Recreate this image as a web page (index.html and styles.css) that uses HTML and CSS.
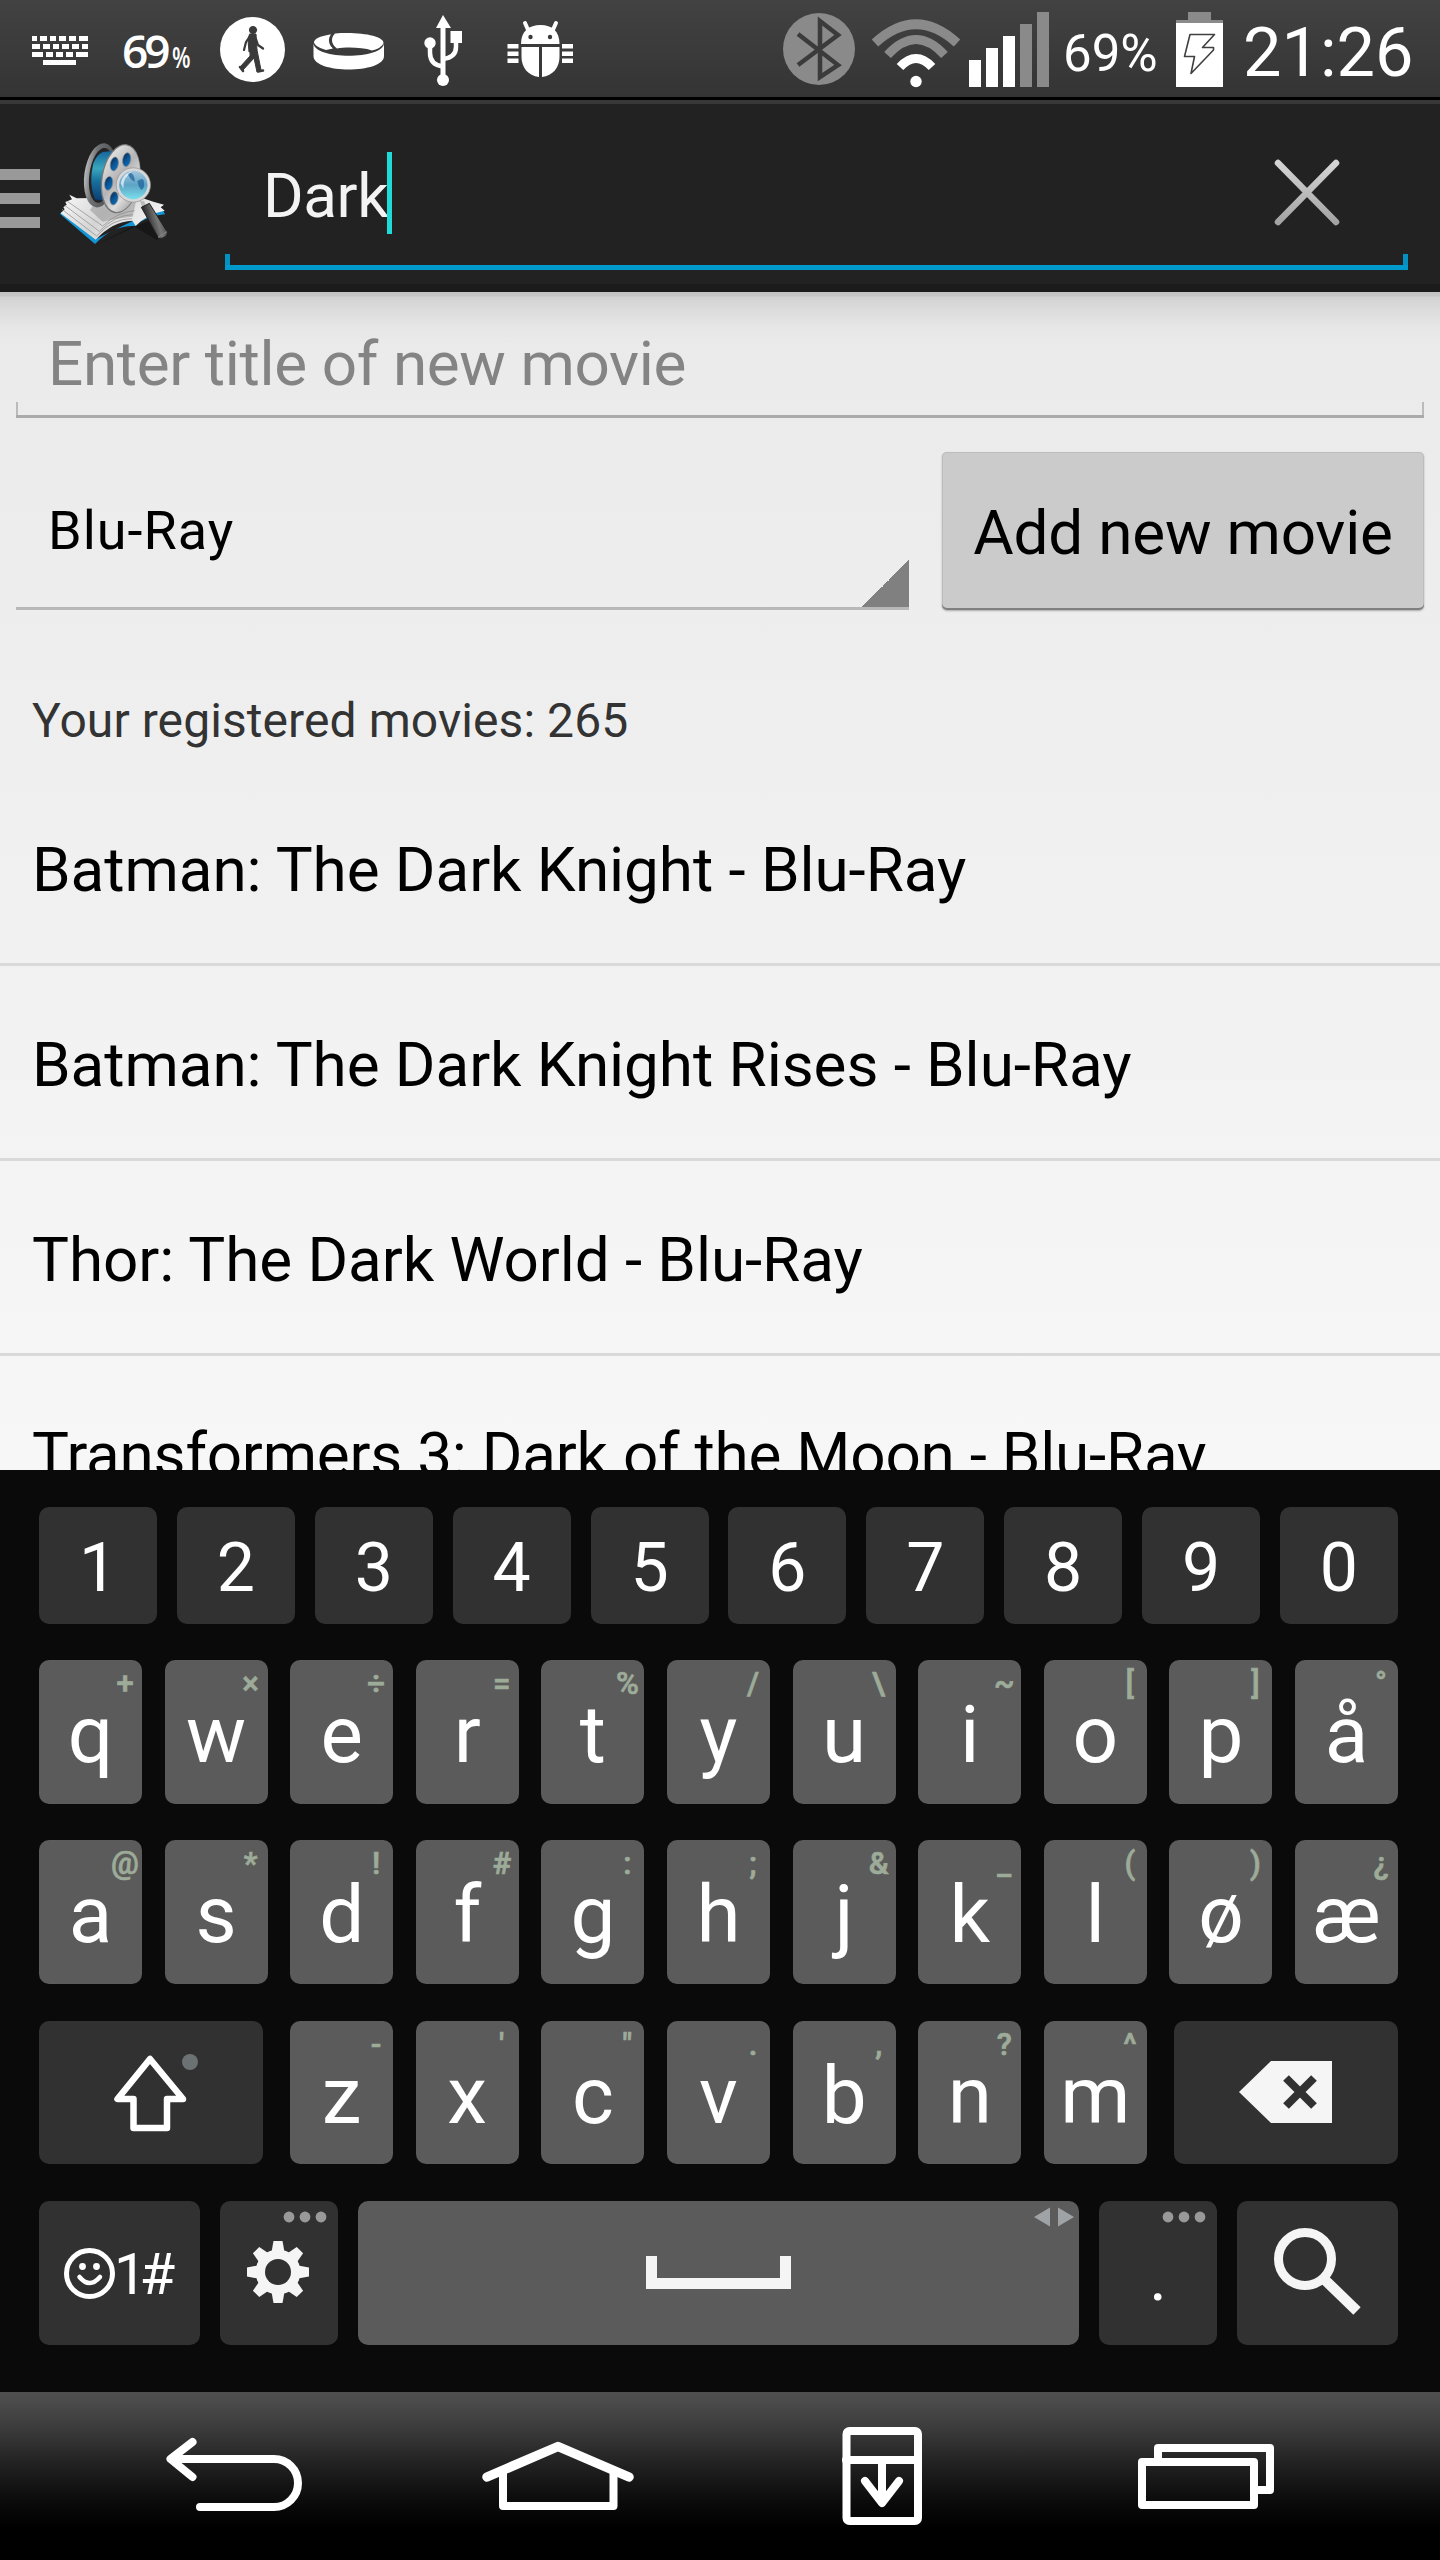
FILE: index.html
```html
<!DOCTYPE html>
<html lang="en">
<head>
<meta charset="utf-8">
<title>Movies</title>
<link rel="stylesheet" href="styles.css">
</head>
<body>
<div class="screen">
  <header class="status">
    <div class="status-left">
      <svg class="ic" width="64" height="97" viewBox="28 0 64 97" fill="#fff">
        <path d="M32 36h5v5h-5zM40 36h7v5h-7zM50 36h6v5h-6zM59 36h7v5h-7zM69 36h7v5h-7zM79 36h9v5h-9zM32 44h8v5h-8zM43 44h7v5h-7zM53 44h6v5h-6zM62 44h7v5h-7zM72 44h7v5h-7zM82 44h6v5h-6zM32 52h11v5h-11zM46 52h7v5h-7zM56 52h7v5h-7zM66 52h7v5h-7zM76 52h12v5h-12zM43 60h33v5h-33z"/>
      </svg>
      <span class="pct-icon"><b>69</b><small>%</small></span>
      <svg class="ic walker" width="66" height="97" viewBox="220 0 66 97">
        <circle cx="252.500" cy="49.500" r="32.500" fill="#fff"/>
        <g fill="#3a3a3a" stroke="#3a3a3a" stroke-linejoin="round" stroke-linecap="round">
          <circle cx="253" cy="30" r="3.600"/>
          <path d="M250 34L256 34L257 50L249 52L248 40Z" stroke-width="1"/>
          <path d="M250 36L246 42L244 50M256 39L258 45L263 48.500" fill="none" stroke-width="2.200"/>
          <path d="M250 50L250 56L240 67L243 70L254 58L257 72L261 70L257 50Z" stroke-width="1"/>
          <path d="M240 67L243 71M258 71.500L263 70.500" fill="none" stroke-width="2.500"/>
        </g>
      </svg>
      <svg class="ic ring" width="72" height="97" viewBox="313 0 72 97">
        <path d="M313.500 43V56C313.500 74 384 74 384 56V43C384 60 313.500 60 313.500 43Z" fill="#fff"/>
        <path d="M330 34.500C320 36 314 39 314 42.500C315 46 320 48 326 50L333 48.500C328 44 328 38 331 34.500Z" fill="#fff"/>
        <path d="M335 33.500C360 31.500 384 36 383.500 43C382 47 377 49.500 372 50.500C362 47 345 47 337 48.500C331 44 330.500 38 335 33.500Z" fill="#fff"/>
      </svg>
      <svg class="ic usb" width="40" height="97" viewBox="423 0 40 97" fill="#fff">
        <path d="M443 15L451 28H436Z"/><path d="M440.500 27h5v48h-5z"/><circle cx="443" cy="80" r="6"/>
        <circle cx="430" cy="43" r="5.700"/><path d="M450.500 31h11.500v12h-11.500z"/>
        <path d="M430 45V53C430 61 435 65.500 443 66.500M456 42V47C456 54 451 58 443 59" fill="none" stroke="#fff" stroke-width="4.500"/>
      </svg>
      <svg class="ic bug" width="68" height="97" viewBox="506 0 68 97" fill="#fff">
        <path d="M525 23L529 32M556 23L552 32" stroke="#fff" stroke-width="4" stroke-linecap="round"/>
        <path d="M521 44C521 31 529 25 540.500 25S559.500 31 559.500 44Z"/>
        <path d="M521.500 47H539V77C528 76 521.500 67 521.500 57ZM542 47H559.500V57C559.500 67 553 76 542 77Z"/>
        <path d="M507.500 44h11v4.500h-11zM507.500 51.500h11v4.500h-11zM507.500 58.500h11v4.500h-11zM562 44h11v4.500h-11zM562 51.500h11v4.500h-11zM562 58.500h11v4.500h-11z"/>
        <circle cx="530.500" cy="37" r="2.200" fill="#3b3b3b"/><circle cx="550" cy="37" r="2.200" fill="#3b3b3b"/>
      </svg>
    </div>
    <div class="status-right">
      <svg class="ic" width="72" height="97" viewBox="783 0 72 97">
        <circle cx="819" cy="49" r="36" fill="#8a8a8a"/>
        <path d="M798 34L838 65L820 77V21L838 35L798 65" fill="none" stroke="#3b3b3b" stroke-width="4.500"/>
      </svg>
      <svg class="ic wifi" width="88" height="97" viewBox="872 0 88 97">
        <g fill="none" stroke="#8a8a8a"><path d="M875 43Q916 5.500 957 43" stroke-width="9.500"/><path d="M887.500 55Q916 24 944.500 55" stroke-width="9"/></g>
        <path d="M900 67Q916 50 932 67" fill="none" stroke="#fff" stroke-width="9"/><circle cx="916" cy="81.500" r="5.700" fill="#fff"/>
      </svg>
      <svg class="ic signal" width="80" height="97" viewBox="969 0 80 97" fill="#fff">
        <path d="M969 60h12v27h-12zM986 48h12v39h-12zM1003 36h12v51h-12z"/><path d="M1020 24h12v63h-12zM1037 12h12v75h-12z" fill="#8a8a8a"/>
      </svg>
      <span class="battery-text">69%</span>
      <svg class="ic battery" width="47" height="97" viewBox="1176 0 47 97">
        <path d="M1188 12h23v8h12v4h-47v-4h12z" fill="#8a8a8a"/><path d="M1176 23h47v64h-47z" fill="#fff"/>
        <path d="M1190 34.500H1214.500L1202.500 47.500H1213.500V50L1191 73.500L1194.500 56.500H1184.500Z" fill="none" stroke="#404040" stroke-width="1.600" stroke-linejoin="round"/>
      </svg>
      <span class="clock">21:26</span>
    </div>
  </header>

  <div class="actionbar">
    <svg class="ic" width="40" height="188" viewBox="0 104 40 188" fill="#999"><path d="M0 169h40v11H0zM0 193h40v11H0zM0 217h40v11H0z"/></svg>
    <svg class="logo" width="150" height="150" viewBox="0 0 450 450">
      <defs>
        <linearGradient id="rim" x1="0" y1="0" x2="1" y2="1"><stop offset="0" stop-color="#f4f4f4"/><stop offset=".45" stop-color="#b4b4b6"/><stop offset=".7" stop-color="#ddd"/><stop offset="1" stop-color="#8c8c8e"/></linearGradient>
        <linearGradient id="rimback" x1="0" y1="0" x2="1" y2="0"><stop offset="0" stop-color="#b9babc"/><stop offset=".3" stop-color="#6f7072"/><stop offset="1" stop-color="#48494b"/></linearGradient>
        <linearGradient id="film" x1="0" y1="0" x2="0" y2="1"><stop offset="0" stop-color="#12639b"/><stop offset=".35" stop-color="#3aa6bd"/><stop offset=".6" stop-color="#17709c"/><stop offset="1" stop-color="#0b3d75"/></linearGradient>
        <linearGradient id="hole" x1="0" y1="0" x2="1" y2="1"><stop offset="0" stop-color="#0a2745"/><stop offset=".5" stop-color="#0a5596"/><stop offset="1" stop-color="#0f74ba"/></linearGradient>
        <linearGradient id="lens" x1="0" y1="0" x2="0" y2="1"><stop offset="0" stop-color="#a9c9e0"/><stop offset=".5" stop-color="#5ea3c6"/><stop offset="1" stop-color="#7be6ee"/></linearGradient>
        <linearGradient id="page" x1="0" y1="0" x2="1" y2=".4"><stop offset="0" stop-color="#fafafa"/><stop offset=".5" stop-color="#d5d5d5"/><stop offset="1" stop-color="#f5f5f5"/></linearGradient>
        <linearGradient id="handle" x1="0" y1=".4" x2="1" y2="0"><stop offset="0" stop-color="#111"/><stop offset=".5" stop-color="#777"/><stop offset="1" stop-color="#222"/></linearGradient>
      </defs>
      <path d="M165 376L280 318L350 360L382 345L330 300Z" fill="#111" opacity=".6"/>
      <path d="M60 282L165 372Q220 315 283 318L300 306Q330 288 375 283L368 268L284 300L166 358L66 274Z" fill="#1396d6"/>
      <path d="M88 224L110 235L300 232L340 245L372 254L362 262L374 272Q320 282 287 318L277 302Q218 304 167 359L62 280L74 268L70 262L80 254L76 246L96 238Z" fill="url(#page)"/>
      <path d="M66 268L170 348Q218 295 276 296M74 256L178 334Q225 285 278 284M82 244L188 318Q232 276 284 272" fill="none" stroke="#999" stroke-width="2.500"/>
      <path d="M170 240L290 235L278 290Q225 295 188 305L150 270Z" fill="#888" opacity=".45"/>
      <ellipse cx="181" cy="166" rx="48" ry="97" transform="rotate(8 181 166)" fill="url(#rimback)"/>
      <ellipse cx="184" cy="166" rx="36" ry="83" transform="rotate(8 184 166)" fill="#242526"/>
      <path d="M188 96L225 92L198 244L165 238Q145 190 160 130Q170 104 188 96Z" fill="url(#film)"/>
      <ellipse cx="242" cy="176" rx="58" ry="105" transform="rotate(10 242 176)" fill="#77787a"/>
      <ellipse cx="243" cy="176" rx="55" ry="101" transform="rotate(10 243 176)" fill="url(#rim)"/>
      <g fill="url(#hole)" stroke="#8b8c8e" stroke-width="2">
        <ellipse cx="223" cy="132" rx="12" ry="21" transform="rotate(10 223 132)"/><ellipse cx="260" cy="119" rx="12" ry="21" transform="rotate(10 260 119)"/>
        <ellipse cx="206" cy="190" rx="12" ry="21" transform="rotate(10 206 190)"/><ellipse cx="222" cy="235" rx="12" ry="20" transform="rotate(10 222 235)"/>
      </g>
      <path d="M300 244L312 243L320 262L309 267Z" fill="#bbb"/>
      <path d="M304 262L328 250L383 338Q380 354 357 356Z" fill="url(#handle)" stroke="#222" stroke-width="3"/>
      <path d="M354 352L380 335" stroke="#888" stroke-width="3"/>
      <circle cx="280" cy="195" r="47" fill="url(#lens)" stroke="#d8d8d8" stroke-width="9"/>
      <circle cx="280" cy="195" r="51.500" fill="none" stroke="#8b8b8b" stroke-width="2"/>
      <path d="M262 158Q284 155 284 185Q270 180 262 158ZM292 184Q316 165 312 200Q302 224 292 184Z" fill="#145a92" opacity=".65"/>
      <path d="M242 190Q250 158 278 153Q248 172 250 206Z" fill="#fff" opacity=".65"/>
    </svg>
    <div class="search">
      <span class="query">Dark</span><i class="caret"></i>
      <svg class="clear" width="84" height="84" viewBox="1265 150 84 84"><defs><linearGradient id="x" x1="0" y1="0" x2="0" y2="1"><stop offset="0" stop-color="#d4d4d4"/><stop offset="1" stop-color="#a4a4a4"/></linearGradient></defs><path d="M1278 163L1336 222M1336 163L1278 222" stroke="url(#x)" stroke-width="6.500" stroke-linecap="round"/></svg>
    </div>
  </div>

  <main class="content">
    <div class="title-input">Enter title of new movie</div>
    <div class="form-row">
      <div class="spinner"><span>Blu-Ray</span></div>
      <div class="add">Add new movie</div>
    </div>
    <p class="count">Your registered movies: 265</p>
    <ul class="movies">
      <li>Batman: The Dark Knight - Blu-Ray</li>
      <li>Batman: The Dark Knight Rises - Blu-Ray</li>
      <li>Thor: The Dark World - Blu-Ray</li>
      <li class="tight">Transformers 3: Dark of the Moon - Blu-Ray</li>
    </ul>
  </main>

  <section class="keyboard">
    <div class="row numbers">
      <div class="key">1</div><div class="key">2</div><div class="key">3</div><div class="key">4</div><div class="key">5</div><div class="key">6</div><div class="key">7</div><div class="key">8</div><div class="key">9</div><div class="key">0</div>
    </div>
    <div class="row letters">
      <div class="key">q<sup>+</sup></div><div class="key">w<sup>×</sup></div><div class="key">e<sup>÷</sup></div><div class="key">r<sup>=</sup></div><div class="key">t<sup>%</sup></div><div class="key">y<sup>/</sup></div><div class="key">u<sup>\</sup></div><div class="key">i<sup>~</sup></div><div class="key">o<sup>[</sup></div><div class="key">p<sup>]</sup></div><div class="key">å<sup>°</sup></div>
    </div>
    <div class="row letters">
      <div class="key">a<sup>@</sup></div><div class="key">s<sup>*</sup></div><div class="key">d<sup>!</sup></div><div class="key">f<sup>#</sup></div><div class="key">g<sup>:</sup></div><div class="key">h<sup>;</sup></div><div class="key">j<sup>&amp;</sup></div><div class="key">k<sup>_</sup></div><div class="key">l<sup>(</sup></div><div class="key">ø<sup>)</sup></div><div class="key">æ<sup>¿</sup></div>
    </div>
    <div class="row third">
      <div class="fn"><svg class="ic" width="224" height="143" viewBox="39 2021 224 143"><path d="M150 2059L117.500 2099H133.500V2128H167V2099H183Z" fill="none" stroke="#fff" stroke-width="6.500" stroke-linejoin="round"/><circle cx="190" cy="2062" r="8" fill="#6c7174"/></svg></div>
      <div class="letters mid">
        <div class="key">z<sup>-</sup></div><div class="key">x<sup>'</sup></div><div class="key">c<sup>"</sup></div><div class="key">v<sup>.</sup></div><div class="key">b<sup>,</sup></div><div class="key">n<sup>?</sup></div><div class="key">m<sup>^</sup></div>
      </div>
      <div class="fn"><svg class="ic" width="224" height="143" viewBox="1174 2021 224 143"><path d="M1239 2092L1271 2061H1332V2123H1271Z" fill="#f5f5f5"/><path d="M1286 2078L1314 2106M1314 2078L1286 2106" stroke="#313131" stroke-width="8"/></svg></div>
    </div>
    <div class="row bottom">
      <div class="fn sym"><svg class="ic smile" width="54" height="144" viewBox="62 2201 54 144"><circle cx="89.500" cy="2273.500" r="23" fill="none" stroke="#fff" stroke-width="5"/><circle cx="82.500" cy="2266.500" r="3.400" fill="#fff"/><circle cx="96.500" cy="2266.500" r="3.400" fill="#fff"/><path d="M79.500 2277Q89.500 2289 100 2277" fill="none" stroke="#fff" stroke-width="4.500" stroke-linecap="round"/></svg><span>1#</span></div>
      <div class="fn narrow"><svg class="ic" width="118" height="144" viewBox="220 2201 118 144">
        <g transform="translate(278 2272)" fill="#f5f5f5"><g id="teeth"><path d="M-6.500 -20L-4.500 -31H4.500L6.500 -20V20L4.500 31H-4.500L-6.500 20Z"/><path d="M-20 -6.500L-31 -4.500V4.500L-20 6.500H20L31 4.500V-4.500L20 -6.500Z"/></g><use href="#teeth" transform="rotate(45)"/><circle r="22.500"/><circle r="13" fill="#313131"/></g>
        <g fill="#999"><circle cx="289" cy="2217" r="5.400"/><circle cx="305" cy="2217" r="5.400"/><circle cx="321" cy="2217" r="5.400"/></g></svg></div>
      <div class="space"><svg class="ic" width="721" height="144" viewBox="358 2201 721 144"><path d="M646 2256h11v22h123v-22h11v33H646z" fill="#f5f5f5"/><path d="M1050 2207.500V2226.500L1034 2217ZM1058 2207.500V2226.500L1074 2217Z" fill="#9fa3a5"/></svg></div>
      <div class="fn narrow dotkey">.<svg class="more" width="44" height="14" viewBox="1162 2210 44 14" fill="#999"><circle cx="1168" cy="2217" r="5.400"/><circle cx="1184" cy="2217" r="5.400"/><circle cx="1200" cy="2217" r="5.400"/></svg></div>
      <div class="fn sym"><svg class="ic" width="161" height="144" viewBox="1237 2201 161 144" fill="none" stroke="#f5f5f5"><circle cx="1305" cy="2259" r="26.500" stroke-width="9"/><path d="M1325 2280L1357 2311" stroke-width="10.500"/></svg></div>
    </div>
  </section>

  <nav class="navbar">
    <svg class="ic" width="1440" height="168" viewBox="0 2392 1440 168" fill="none" stroke="#fff" stroke-width="8" stroke-linecap="round" stroke-linejoin="round">
      <path d="M192.500 2442L170.500 2459L192.500 2477M171 2459H274a24 24 0 0 1 0 48H200"/>
      <path d="M487 2477L558 2446.500L629 2477" stroke-width="9.500"/><path d="M503 2472V2506H613.500V2472"/>
      <rect x="846.500" y="2431" width="71.500" height="90" rx="3"/><path d="M846 2460H918M882 2460V2500M865 2481L882 2503L899 2481"/>
      <rect x="1142" y="2462" width="112" height="43"/><path d="M1158 2462V2448H1270V2490H1256"/>
    </svg>
  </nav>
</div>
</body>
</html>
```
FILE: styles.css
```css
* { box-sizing: border-box; }
body { margin: 0; background: #000; font-family: Roboto, "Noto Sans", sans-serif; }
.screen { width: 1440px; height: 2560px; display: flex; flex-direction: column; overflow: hidden; }
.ic { display: block; flex: none; }
span { white-space: nowrap; }

.status { height: 100px; flex: none; display: flex; justify-content: space-between; background: linear-gradient(#424242, #343434 97px, #000 97px); color: #fff; }
.status-left, .status-right { display: flex; height: 97px; }
.status-left { padding-left: 28px; }
.status-right { width: 657px; }
.pct-icon { width: 70px; margin-left: 30px; display: flex; align-items: baseline; }
.pct-icon b { font: 600 46px/101px "Open Sans", sans-serif; letter-spacing: -4px; }
.pct-icon small { font: 600 29px/101px "Open Sans", sans-serif; margin-left: 5px; transform: scaleX(.74); transform-origin: 0 50%; }
.walker { margin-left: 28px; }
.ring { margin-left: 27px; }
.usb { margin-left: 38px; }
.bug { margin-left: 43px; }
.wifi { margin-left: 17px; }
.signal { margin-left: 9px; }
.battery-text { width: 112px; padding-left: 14px; font-size: 51px; line-height: 107px; }
.battery { margin-left: 15px; }
.clock { margin-left: 20px; font-size: 68.5px; line-height: 106px; }

.actionbar { height: 192px; flex: none; display: flex; border-top: 4px solid #383838; background: linear-gradient(#222 180px, #1b1b1b 180px); }
.logo { margin-top: 16px; flex: none; }
.search { width: 1183px; height: 166px; margin-left: 35px; padding-left: 38px; display: flex; align-items: flex-start;
  background: linear-gradient(#0099cc, #0099cc) 0 100% / 100% 5px no-repeat, linear-gradient(#0490c0, #0490c0) 0 100% / 5px 16px no-repeat, linear-gradient(#0490c0, #0490c0) 100% 100% / 5px 16px no-repeat; }
.query { width: 124px; font-size: 62px; line-height: 184px; letter-spacing: -.4px; color: #f3f3f3; }
.caret { width: 5px; height: 82px; margin-top: 48px; background: #1fdbd7; }
.clear { margin: 46px 59px 0 auto; }

.content { height: 1178px; flex: none; overflow: hidden; padding: 0 16px;
  background: linear-gradient(#c3c3c3, #c5c5c5 4px, #d2d2d2 5px, #dcdcdc 18px, #e6e6e6 34px, rgba(235,235,235,0) 52px), linear-gradient(#eaeaea, #f7f7f7); }
.title-input { height: 126px; padding-left: 32px; font-size: 62px; line-height: 144px; letter-spacing: -.36px; color: #848484; white-space: nowrap;
  background: linear-gradient(#aaa, #aaa) 0 100% / 100% 3px no-repeat, linear-gradient(#bbb, #bbb) 0 100% / 2px 16px no-repeat, linear-gradient(#bbb, #bbb) 100% 100% / 2px 16px no-repeat; }
.form-row { display: flex; justify-content: space-between; margin-top: 33px; }
.spinner { width: 893px; height: 159px; padding-left: 32px; font-size: 54px; line-height: 159px; letter-spacing: 1px; color: #000; border-bottom: 3px solid #b8b8b8;
  background: linear-gradient(135deg, transparent 50%, #808080 50%) 100% 100% / 49px 51px no-repeat; background-origin: border-box; background-clip: border-box; }
.add { width: 482px; height: 158px; margin-top: 1px; font-size: 62px; line-height: 162px; letter-spacing: -.2px; text-align: center; color: #000; white-space: nowrap; background: #cbcbcb; border-radius: 5px; box-shadow: inset 0 -2px 0 #808080, inset 0 0 0 1px #bdbdbd, 0 1px 2px #aaa; }
.count { height: 161px; margin: 0 0 0 16px; font-size: 48px; line-height: 222px; letter-spacing: .08px; color: #333; }
.movies { margin: 0 -16px; padding: 0; list-style: none; }
.movies li { height: 195px; padding-left: 32px; font-size: 62px; line-height: 198px; letter-spacing: -.06px; color: #000; border-bottom: 3px solid #d9d9d9; white-space: nowrap; }
.movies .tight { letter-spacing: -.22px; }

.keyboard { height: 922px; flex: none; padding: 37px 42px 0 39px; background: #0a0a0a; color: #fff; display: flex; flex-direction: column; gap: 36px; }
.row { display: flex; justify-content: space-between; }
.key, .fn, .space { position: relative; border-radius: 10px; text-align: center; }
.numbers .key { width: 118px; height: 117px; background: #313131; font-size: 68px; line-height: 122px; }
.letters .key { width: 103px; height: 144px; background: #5b5b5b; font-size: 80px; line-height: 151px; }
.letters sup { position: absolute; right: -13px; top: 0; width: 60px; font-size: 31px; font-weight: 500; line-height: 47px; color: #9dab99; -webkit-text-stroke: .7px #9dab99; }
.third, .bottom { margin-top: 1px; }
.mid { width: 857px; display: flex; justify-content: space-between; }
.mid .key { height: 143px; }
.fn { width: 224px; height: 143px; background: #313131; }
.bottom .fn { height: 144px; }
.bottom .sym { width: 161px; display: flex; }
.sym span { margin-left: -2px; font-size: 58px; line-height: 147px; letter-spacing: -7px; }
.smile { margin-left: 23px; }
.bottom .narrow { width: 118px; }
.space { width: 721px; height: 144px; background: #5b5b5b; }
.dotkey { font-size: 67px; line-height: 152px; }
.more { position: absolute; right: 11px; top: 9px; }

.navbar { height: 168px; flex: none; background: linear-gradient(#505050, #3d3d3d 34px, #222 71px, #0c0c0c 107px, #000 136px); }
```
